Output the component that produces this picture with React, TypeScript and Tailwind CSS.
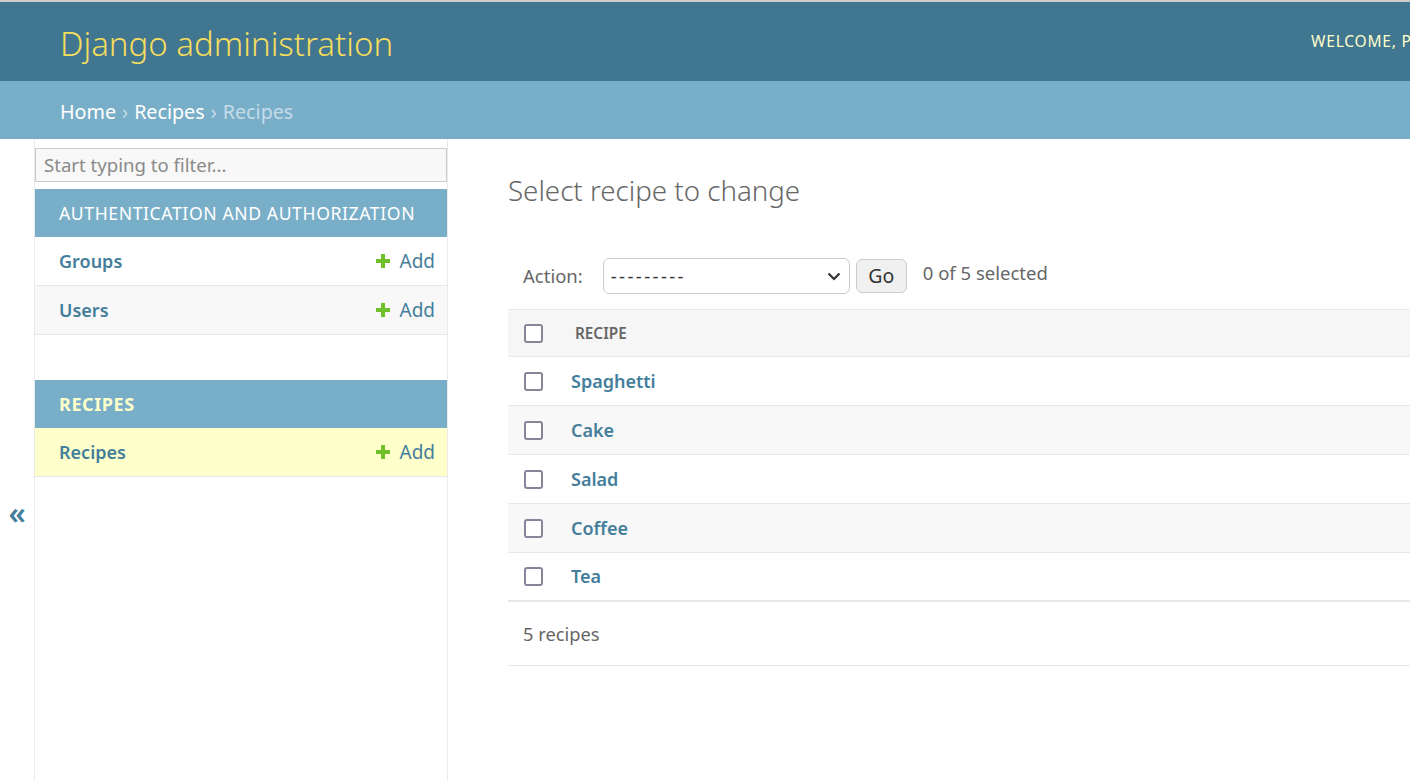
import React from "react";

function Plus() {
  return (
    <svg width="14" height="14" viewBox="0 0 14 14" className="inline-block">
      <rect x="5" y="0" width="4" height="14" fill="#70bf2b" />
      <rect x="0" y="5" width="14" height="4" fill="#70bf2b" />
    </svg>
  );
}

function Checkbox() {
  return <div className="h-[19px] w-[19px] shrink-0 rounded-[3px] border-[2.5px] border-[#86859a] bg-white" />;
}

function SideRow({ name, bg }: { name: string; bg: string }) {
  return (
    <div className={`flex h-[49px] items-center justify-between border-b border-[#e8e8e8] pl-[24px] pr-[12px] ${bg}`}>
      <span className="text-[18px] font-semibold text-[#447e9b]">{name}</span>
      <span className="flex items-center gap-[9px] text-[19px] text-[#447e9b]">
        <Plus />
        Add
      </span>
    </div>
  );
}

const recipes = ["Spaghetti", "Cake", "Salad", "Coffee", "Tea"];

export default function App() {
  return (
    <div className="flex h-[781px] w-[1410px] flex-col overflow-hidden border-t-2 border-[#cdcdcd] bg-white font-['Noto_Sans',sans-serif] text-[#333]">
      {/* Header */}
      <div className="flex h-[79px] shrink-0 items-center bg-[#417690] pl-[60px] pt-[4px]">
        <div className="flex-1 text-[33px] font-light text-[#f5dd5d]">Django administration</div>
        <div className="-mt-[4px] w-[99px] shrink-0 overflow-visible whitespace-nowrap text-[15.5px] tracking-[0.8px] text-[#ffc]">
          WELCOME, PETER.
        </div>
      </div>
      {/* Breadcrumbs */}
      <div className="flex h-[58px] shrink-0 items-center bg-[#79aec8] pl-[60px] pt-[3px] text-[19.7px]">
        <span className="text-white">Home</span>
        <span className="mx-[6px] text-[#c4dce8]">›</span>
        <span className="text-white">Recipes</span>
        <span className="mx-[6px] text-[#c4dce8]">›</span>
        <span className="text-[#c4dce8]">Recipes</span>
      </div>
      {/* Main */}
      <div className="flex min-h-0 flex-1">
        {/* toggle */}
        <div className="flex w-[35px] shrink-0 justify-center border-r border-[#eaeaea] pt-[359px] text-[30px] font-semibold leading-none text-[#447e9b]">
          <span>«</span>
        </div>
        {/* sidebar */}
        <div className="w-[413px] shrink-0 border-r border-[#eaeaea] pt-[9px]">
          <div className="mb-[7px] flex h-[34px] items-center border border-[#ccc] bg-[#f8f8f8] pl-[8px] text-[18.6px] text-[#8a8a8a]">
            Start typing to filter...
          </div>
          <div className="flex h-[48px] items-center whitespace-nowrap bg-[#79aec8] pl-[24px] text-[17.6px] tracking-[0.6px] text-white">
            AUTHENTICATION AND AUTHORIZATION
          </div>
          <SideRow name="Groups" bg="bg-white" />
          <SideRow name="Users" bg="bg-[#f8f8f8]" />
          <div className="mt-[45px] flex h-[48px] items-center bg-[#79aec8] pl-[24px] text-[18px] font-bold tracking-[0.6px] text-[#ffc]">
            RECIPES
          </div>
          <SideRow name="Recipes" bg="bg-[#ffc]" />
        </div>
        {/* content */}
        <div className="min-w-0 flex-1 pl-[60px] pt-[30px]">
          <h1 className="mb-[39px] h-[42px] text-[27.7px] font-light leading-[42px] text-[#666]">Select recipe to change</h1>
          <div className="flex h-[52px] items-center pl-[15px] text-[18.5px] text-[#666]">
            <span className="mr-[20px]">Action:</span>
            <div className="flex h-[36px] w-[247px] items-center justify-between rounded-[6px] border border-[#ccc] bg-white pl-[7px] pr-[8px] text-[#333]">
              <span className="tracking-[2.4px]">---------</span>
              <svg width="14" height="9" viewBox="0 0 14 9">
                <path d="M1.5 1.5 L7 7 L12.5 1.5" fill="none" stroke="#333" strokeWidth="2.2" />
              </svg>
            </div>
            <div className="ml-[6px] flex h-[34px] w-[51px] items-center justify-center rounded-[6px] border border-[#ccc] bg-[#f0f0f0] text-[19.5px] text-[#333]">
              Go
            </div>
            <span className="ml-[16px] -mt-[6px]">0 of 5 selected</span>
          </div>
          <div className="mt-[7px] border-t border-[#eaeaea]">
            <div className="flex h-[47px] items-center border-b border-[#e8e8e8] bg-[#f6f6f6] pl-[16px]">
              <Checkbox />
              <span className="ml-[32px] text-[15.3px] font-semibold text-[#666]">RECIPE</span>
            </div>
            {recipes.map((r, i) => (
              <div
                key={r}
                className={`flex h-[49px] items-center pl-[16px] ${i % 2 === 1 ? "bg-[#f8f8f8]" : "bg-white"} ${
                  i === recipes.length - 1 ? "border-b-2" : "border-b"
                } border-[#e8e8e8]`}
              >
                <Checkbox />
                <span className="ml-[28px] text-[18px] font-semibold text-[#447e9b]">{r}</span>
              </div>
            ))}
            <div className="flex h-[64px] items-center border-b border-[#e8e8e8] pl-[15px] text-[18.3px] text-[#666]">
              5 recipes
            </div>
          </div>
        </div>
      </div>
    </div>
  );
}
